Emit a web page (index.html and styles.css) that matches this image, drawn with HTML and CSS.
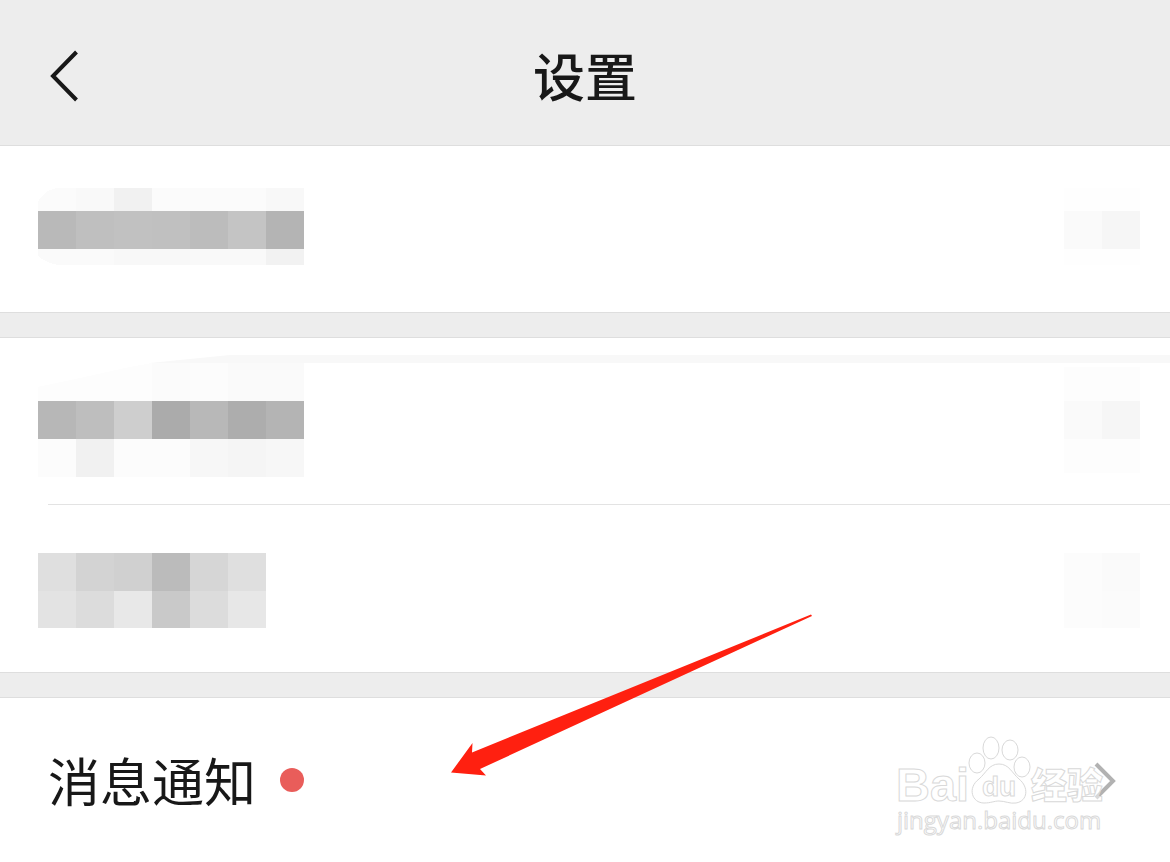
FILE: index.html
```html
<!DOCTYPE html>
<html lang="zh-CN">
<head>
<meta charset="utf-8">
<meta name="viewport" content="width=device-width, initial-scale=1">
<title>设置</title>
<link rel="stylesheet" href="styles.css">
</head>
<body>
<div class="screen">
  <header class="topbar">
    <button class="back" type="button" aria-label="返回">
      <svg width="32" height="56" viewBox="0 0 32 56" fill="none" stroke="#181818" stroke-width="4" aria-hidden="true"><path d="M28.500 5 5 29 28.500 53"/></svg>
    </button>
    <h1 class="title">设置</h1>
  </header>

  <main>
    <section class="group">
      <div class="row">
        <svg class="mosaic" width="266" height="77" viewBox="0 0 266 77" shape-rendering="crispEdges" aria-hidden="true">
          <path fill="#fbfbfb" d="M0 23V14Q5 3 18 0H38V23Z"/>
          <path fill="#f9f9f9" d="M38 0h38v23H38z"/><path fill="#f1f1f1" d="M76 0h38v23H76z"/>
          <path fill="#fbfbfb" d="M114 0h114v23H114z"/><path fill="#f8f8f8" d="M228 0h38v23H228z"/>
          <path fill="#b9b9b9" d="M0 23h38v38H0z"/><path fill="#bfbfbf" d="M38 23h38v38H38z"/>
          <path fill="#c1c1c1" d="M76 23h38v38H76z"/><path fill="#c0c0c0" d="M114 23h38v38H114z"/>
          <path fill="#bcbcbc" d="M152 23h38v38H152z"/><path fill="#c4c4c4" d="M190 23h38v38H190z"/>
          <path fill="#b4b4b4" d="M228 23h38v38H228z"/>
          <path fill="#fafafa" d="M0 61H76V77H20Q6 74 0 68Z"/><path fill="#f8f8f8" d="M76 61h76v16H76z"/>
          <path fill="#f9f9f9" d="M152 61h76v16H152z"/><path fill="#f2f2f2" d="M228 61h38v16H228z"/>
        </svg>
        <svg class="mosaic" width="76" height="77" viewBox="0 0 76 77" shape-rendering="crispEdges" aria-hidden="true">
          <path fill="#fefefe" d="M0 0h76v77H0z"/><path fill="#fafafa" d="M0 23h38v38H0z"/><path fill="#f6f6f6" d="M38 23h38v38H38z"/>
        </svg>
      </div>
    </section>

    <section class="group">
      <div class="row row-streaked">
        <div class="streak" aria-hidden="true">
          <svg width="230" height="32" viewBox="0 0 230 32"><path fill="#fcfcfc" d="M38 32 76 24 130 12 180 5 230 8V32Z"/><path fill="#f8f8f8" d="M150 8 230 0V8Z"/></svg>
          <span class="streak-line"></span>
        </div>
        <svg class="mosaic" width="266" height="114" viewBox="0 0 266 114" shape-rendering="crispEdges" aria-hidden="true">
          <path fill="#fdfdfd" d="M0 24 38 16 92 4 114 0V38H0Z"/>
          <path fill="#fbfbfb" d="M114 0h38v38H114z"/><path fill="#fcfcfc" d="M152 0h38v38H152z"/><path fill="#fafafa" d="M190 0h76v38H190z"/>
          <path fill="#b7b7b7" d="M0 38h38v38H0z"/><path fill="#bebebe" d="M38 38h38v38H38z"/>
          <path fill="#cecece" d="M76 38h38v38H76z"/><path fill="#ababab" d="M114 38h38v38H114z"/>
          <path fill="#b8b8b8" d="M152 38h38v38H152z"/><path fill="#adadad" d="M190 38h38v38H190z"/>
          <path fill="#b4b4b4" d="M228 38h38v38H228z"/>
          <path fill="#fcfcfc" d="M0 76h152v38H0z"/><path fill="#f1f1f1" d="M38 76h38v38H38z"/>
          <path fill="#f7f7f7" d="M152 76h38v38H152z"/><path fill="#f5f5f5" d="M190 76h38v38H190z"/><path fill="#f7f7f7" d="M228 76h38v38H228z"/>
        </svg>
        <svg class="mosaic" width="76" height="114" viewBox="0 0 76 114" shape-rendering="crispEdges" aria-hidden="true">
          <path fill="#fdfdfd" d="M0 4h76v106H0z"/><path fill="#fafafa" d="M0 38h38v38H0z"/><path fill="#f6f6f6" d="M38 38h38v38H38z"/>
        </svg>
      </div>
      <hr class="divider">
      <div class="row row-second">
        <svg class="mosaic" width="228" height="75" viewBox="0 0 228 75" shape-rendering="crispEdges" aria-hidden="true">
          <path fill="#dfdfdf" d="M0 0h38v38H0z"/><path fill="#d3d3d3" d="M38 0h38v38H38z"/>
          <path fill="#d0d0d0" d="M76 0h38v38H76z"/><path fill="#bbbbbb" d="M114 0h38v38H114z"/>
          <path fill="#d6d6d6" d="M152 0h38v38H152z"/><path fill="#dfdfdf" d="M190 0h38v38H190z"/>
          <path fill="#e3e3e3" d="M0 38h38v37H0z"/><path fill="#dcdcdc" d="M38 38h38v37H38z"/>
          <path fill="#e8e8e8" d="M76 38h38v37H76z"/><path fill="#c9c9c9" d="M114 38h38v37H114z"/>
          <path fill="#dcdcdc" d="M152 38h38v37H152z"/><path fill="#e7e7e7" d="M190 38h38v37H190z"/>
        </svg>
        <svg class="mosaic" width="76" height="75" viewBox="0 0 76 75" shape-rendering="crispEdges" aria-hidden="true">
          <path fill="#fcfcfc" d="M0 0h38v75H0z"/><path fill="#fafafa" d="M38 0h38v38H38z"/><path fill="#fbfbfb" d="M38 38h38v37H38z"/>
        </svg>
      </div>
    </section>

    <section class="group">
      <a class="row row-link" href="#notifications">
        <span class="label">消息通知</span>
        <span class="dot"></span>
        <svg class="chevron" width="24" height="40" viewBox="0 0 24 40" fill="none" stroke="#b2b2b2" stroke-width="4" aria-hidden="true"><path d="M4 4 21 21 4 38"/></svg>
      </a>
    </section>
  </main>

  <svg class="arrow" width="364" height="164" viewBox="0 0 364 164" aria-hidden="true">
    <path fill="#ff2010" d="M1 159.500 22.500 130 22 139.500 361 1.500 362 3 30 156 36 162.500Z"/>
  </svg>

  <svg class="watermark" width="216" height="114" viewBox="0 0 216 114" role="img" aria-label="Baidu 经验">
    <g class="wm-shape">
      <ellipse cx="84" cy="36" rx="8" ry="10"/>
      <ellipse cx="98" cy="21" rx="8" ry="11"/>
      <ellipse cx="117" cy="23" rx="8" ry="10"/>
      <ellipse cx="129" cy="40" rx="8" ry="10"/>
      <path d="M106 37C96 37 93 46 86 52C74 61 79 76 91 76C98 76 101 74 106 74C112 74 117 77 123 76C135 74 136 60 126 52C119 46 116 37 106 37Z"/>
    </g>
    <text class="wm-text wm-bai" x="3" y="74">Bai</text>
    <text class="wm-text wm-du" x="89" y="69">du</text>
    <text class="wm-text wm-cjk" x="138" y="72">经验</text>
    <text class="wm-text wm-url" x="4" y="102">jingyan.baidu.com</text>
  </svg>
</div>
</body>
</html>
```
FILE: styles.css
```css
* {
  box-sizing: border-box;
}

body {
  margin: 0;
  background: #fff;
  color: #181818;
  font-family: "Noto Sans CJK SC", sans-serif;
}

.screen {
  position: relative;
  overflow: hidden;
  background: #ededed;
}

.topbar {
  display: grid;
  grid-template-columns: 1fr auto 1fr;
  align-items: center;
  padding: 37px 48px 32px;
  border-bottom: 1px solid #dedede;
}

.back {
  display: flex;
  justify-self: start;
  padding: 10px 0;
  border: 0;
  background: none;
}

.title {
  margin: 0;
  font-size: 52px;
  font-weight: 500;
  line-height: 76px;
}

.group {
  background: #fff;
  border-bottom: 1px solid #dedede;
}

.group:last-child {
  border-bottom: 0;
}

.group + .group {
  margin-top: 24px;
  border-top: 1px solid #dedede;
}

.row {
  display: flex;
  justify-content: space-between;
  align-items: flex-start;
  padding: 42px 30px 47px 38px;
}

.mosaic {
  display: block;
  flex: none;
}

.row-streaked {
  position: relative;
  padding-top: 25px;
  padding-bottom: 27px;
}

.row-streaked .mosaic {
  position: relative;
}

.streak {
  position: absolute;
  top: 17px;
  left: 0;
  right: 0;
  display: flex;
}

.streak-line {
  flex: 1;
  height: 8px;
  background: #f8f8f8;
}

.divider {
  margin: 0 0 0 48px;
  border: 0;
  border-top: 1px solid #e3e3e3;
}

.row-second {
  padding-top: 48px;
  padding-bottom: 44px;
}

.row-link {
  justify-content: flex-start;
  align-items: center;
  gap: 24px;
  padding: 44px 54px 44px 48px;
  color: inherit;
  text-decoration: none;
}

.label {
  font-size: 52px;
  font-weight: 400;
  line-height: 76px;
}

.dot {
  width: 24px;
  height: 24px;
  border-radius: 50%;
  background: #e95d5a;
}

.chevron {
  margin-left: auto;
}

.arrow {
  position: absolute;
  top: 613px;
  left: 450px;
}

.watermark {
  position: absolute;
  right: 61px;
  bottom: 21px;
}

.wm-shape,
.wm-text {
  fill: #fff;
  fill-opacity: 0.5;
  stroke: #d9d9d9;
  stroke-width: 1px;
}

.wm-text {
  font-family: "Liberation Sans", "Noto Sans CJK SC", sans-serif;
}

.wm-bai {
  font-size: 47px;
  font-weight: 700;
}

.wm-du {
  font-size: 28px;
  font-weight: 700;
}

.wm-cjk {
  font-size: 36px;
  font-weight: 900;
}

.wm-url {
  font-family: "Open Sans", sans-serif;
  font-size: 24px;
  font-weight: 500;
}
```
